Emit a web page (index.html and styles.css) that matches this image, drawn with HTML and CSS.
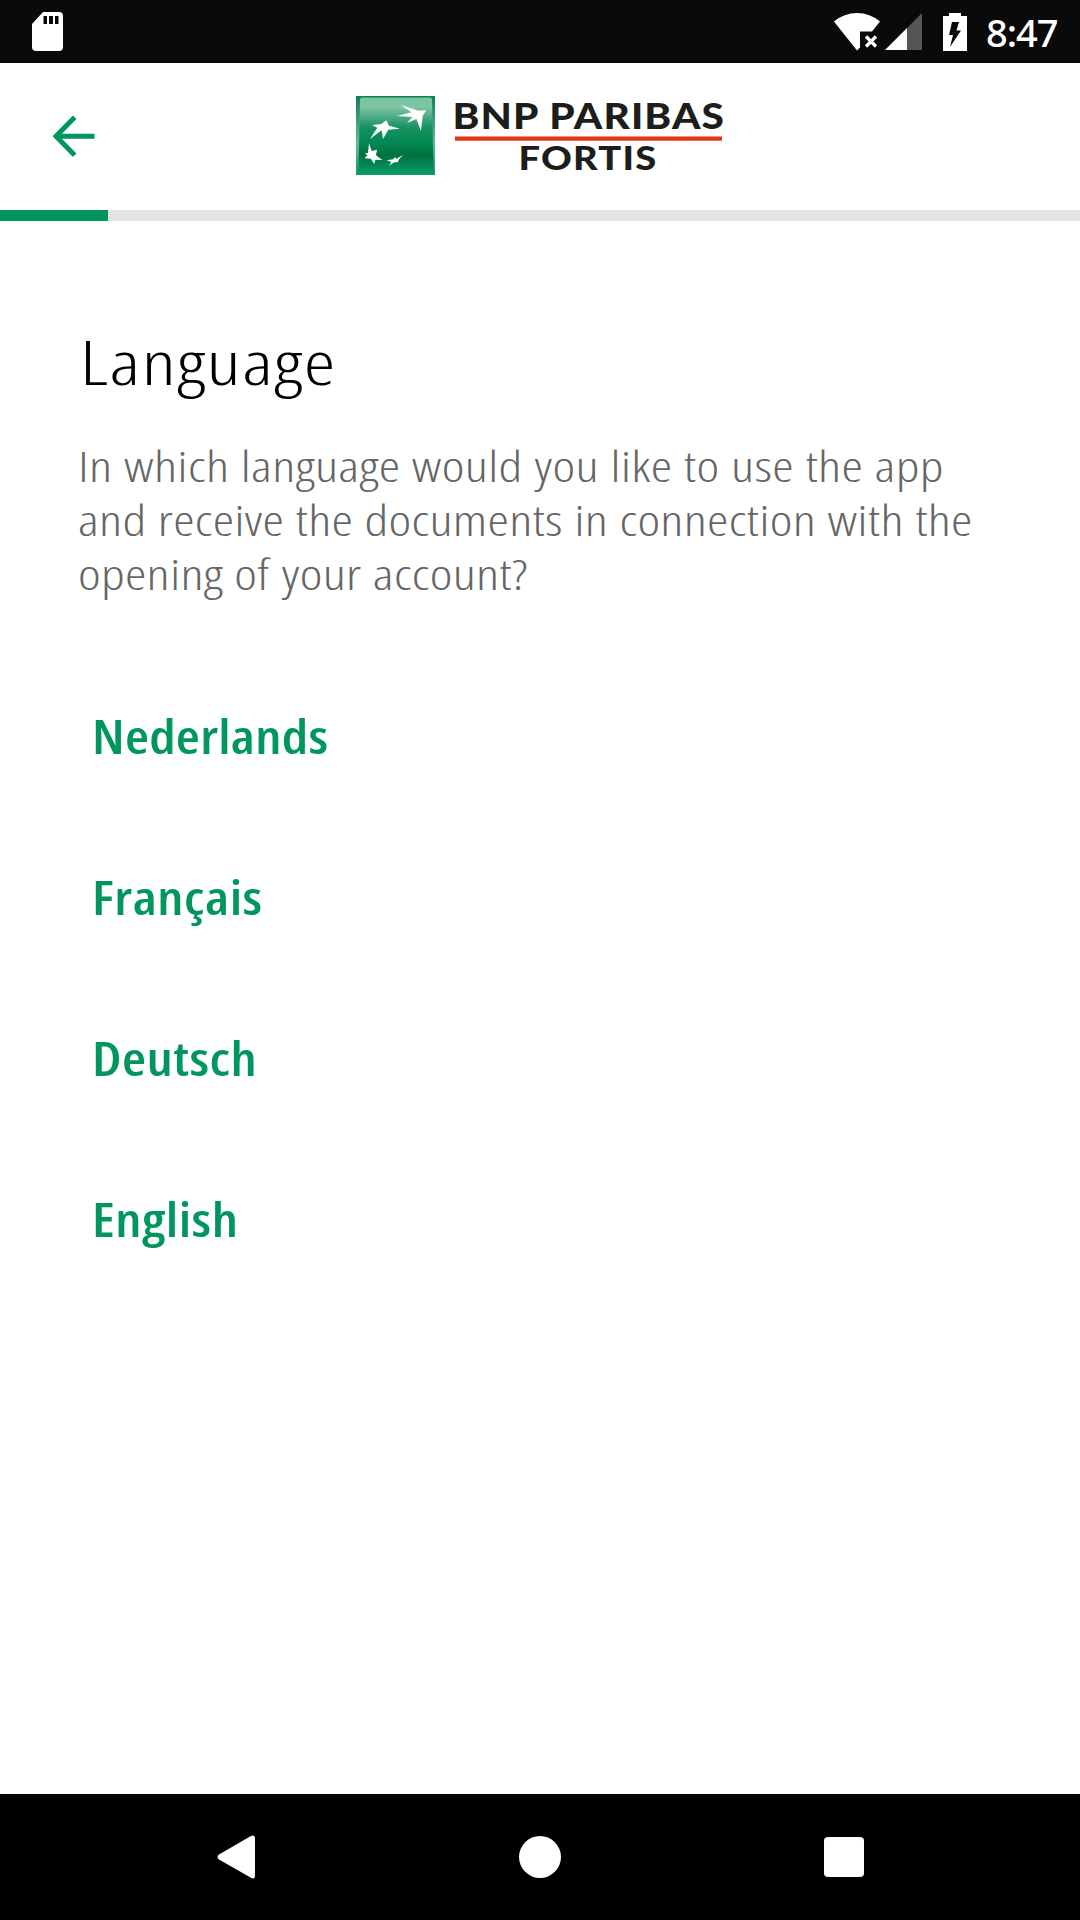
FILE: index.html
```html
<!DOCTYPE html>
<html lang="en">
<head>
<meta charset="utf-8">
<title>Language</title>
<link rel="stylesheet" href="styles.css">
</head>
<body>
<div class="screen">
  <div class="status">
    <svg class="sd" width="31" height="39" viewBox="0 0 31 39"><path fill="#fff" fill-rule="evenodd" d="M11 0H27Q31 0 31 4V35Q31 39 27 39H4Q0 39 0 35V12ZM11.500 4V12H15V4ZM17 4V12H21V4ZM23 4V12H26.500V4Z"/></svg>
    <div class="status-icons">
      <svg width="47" height="38" viewBox="0 0 47 38"><path fill="#fff" d="M0 8.500Q10 0 23 0T46 8.500L38 18.500H26V34.500L23 37.500Z"/><path stroke="#fff" stroke-width="3.200" d="M32 23.500L42 33.500M42 23.500L32 33.500"/></svg>
      <svg class="signal" width="37" height="37" viewBox="0 0 37 37"><path fill="#555" d="M37 0V37H22V15Z"/><path fill="#fff" d="M22 15V37H0Z"/></svg>
      <svg class="battery" width="24" height="38" viewBox="0 0 24 38"><path fill="#fff" d="M6 0H18V3H24V38H0V3H6Z"/><path fill="#0a0a0a" d="M9 9H16L13.500 17.500H18L7 34L10 22H6Z"/></svg>
      <span class="clock">8:47</span>
    </div>
  </div>
  <header class="header">
    <svg class="back" width="42" height="42" viewBox="0 0 42 42"><path fill="none" stroke="#00965e" stroke-width="5" d="M21.700 2.300L3 21.200L21.700 40.200M3 21.200H41.500"/></svg>
    <svg class="logo" width="370" height="80" viewBox="0 0 370 80">
      <defs>
        <linearGradient id="green" x1="0" y1="0" x2="0" y2="1"><stop offset="0" stop-color="#77c2a0"/><stop offset=".12" stop-color="#80c5a6"/><stop offset=".4" stop-color="#16915f"/><stop offset=".6" stop-color="#008853"/><stop offset=".76" stop-color="#00713f"/><stop offset="1" stop-color="#049a62"/></linearGradient>
        <linearGradient id="edge" x1="0" y1="0" x2="0" y2="1"><stop offset="0" stop-color="#0b8253"/><stop offset=".6" stop-color="#68b894"/><stop offset="1" stop-color="#0c9a63"/></linearGradient>
      </defs>
      <rect width="79" height="79" fill="url(#edge)"/>
      <path fill="url(#green)" d="M6 1.500H74Q76 1.500 76 4L77.500 77H2.500L4 4Q4 1.500 6 1.500Z"/>
      <g fill="#fff" transform="scale(.33333) translate(-48 -48)">
        <path d="M182 75L236 92L259 91L248 107L243 153L229 117L201 129L217 111L171 108L214 97Z"/>
        <path d="M139 121L147 137L180 146L145 149L129 177L125 151L90 177L112 143L96 135L124 132Z"/>
        <path d="M87 190L95 213L111 209L108 226L127 240L106 239L103 251L92 236L74 235L82 225L74 220L84 219Z"/>
        <path d="M189 225L176 239L174 247L163 247L147 257L154 246L140 241L160 238L164 232L170 236Z"/>
      </g>
      <g class="wordmark">
        <text x="96.500" y="33" font-size="36.500" textLength="272.500" lengthAdjust="spacingAndGlyphs">BNP PARIBAS</text>
        <text x="162.500" y="73.500" font-size="31.500" textLength="139" lengthAdjust="spacingAndGlyphs">FORTIS</text>
      </g>
      <rect x="99" y="40.500" width="267" height="4.200" fill="#e63312"/>
    </svg>
  </header>
  <div class="progress"><div class="progress-fill"></div></div>
  <main class="content">
    <h1 class="title">Language</h1>
    <p class="question">
      <span class="line">In which language would you like to use the app</span>
      <span class="line">and receive the documents in connection with the</span>
      <span class="line">opening of your account?</span>
    </p>
    <nav class="options">
      <a class="option">Nederlands</a>
      <a class="option">Français</a>
      <a class="option">Deutsch</a>
      <a class="option">English</a>
    </nav>
  </main>
  <div class="navbar">
    <svg width="40" height="44" viewBox="0 0 40 44"><path fill="#fff" d="M34.500 1.200Q39 -1.200 39 3.500V40.500Q39 45 34.500 42.500L3 24.500Q0 22 3 19.500Z"/></svg>
    <span class="home"></span>
    <span class="recent"></span>
  </div>
</div>
</body>
</html>
```
FILE: styles.css
```css
* { box-sizing: border-box; }
body { margin: 0; background: #fff; font-family: "Open Sans", "Noto Sans", sans-serif; }
.screen { width: 1080px; height: 1920px; display: flex; flex-direction: column; overflow: hidden; background: #fff; }

.status { height: 63px; padding: 0 22px 0 32px; background: #0a0a0a; display: flex; justify-content: space-between; align-items: center; }
.status-icons { display: flex; align-items: center; }
.status-icons svg { display: block; }
.signal { margin-left: 4px; }
.battery { margin-left: 21px; }
.clock { margin-left: 19.5px; padding-top: 1px; width: 72px; font: 500 38px/63px "Noto Sans", sans-serif; letter-spacing: -1px; color: #fff; white-space: nowrap; }

.header { height: 147px; padding: 0 53px 1px; display: grid; grid-template-columns: 303px 370px; align-items: center; }
.back { display: block; }
.logo { display: block; overflow: visible; }
.wordmark { font-family: Lato, sans-serif; font-weight: 900; fill: #1d1d1b; letter-spacing: 1px; }

.progress { height: 11px; background: #e4e4e4; }
.progress-fill { width: 10%; height: 100%; background: #00965e; }

.content { flex: 1; padding: 98px 78px 0; font-stretch: 75%; }
.title { width: max-content; margin: 0 0 0 2px; font-size: 61.5px; line-height: 84px; font-weight: 300; letter-spacing: 1.1px; color: #000; white-space: nowrap; transform: scaleX(1.3); transform-origin: 0 50%; }
.question { margin: 36px 0 0; font-size: 42.5px; font-weight: 300; line-height: 54px; color: #666; }
.line { display: block; width: max-content; white-space: nowrap; letter-spacing: .2px; word-spacing: .8px; transform: scaleX(1.275); transform-origin: 0 50%; }
.line:first-child { letter-spacing: .25px; }

.options { margin-top: 55px; padding-left: 14px; display: flex; flex-direction: column; }
.option { width: max-content; height: 161px; line-height: 161px; font-size: 46px; font-weight: 600; letter-spacing: .4px; color: #00965e; white-space: nowrap; transform: scaleX(1.2); transform-origin: 0 50%; }
.option:first-child { letter-spacing: .2px; }

.navbar { height: 126px; padding: 0 216px; background: #000; display: flex; justify-content: space-between; align-items: center; }
.home { width: 42px; height: 42px; border-radius: 50%; background: #fff; }
.recent { width: 40px; height: 40px; border-radius: 4px; background: #fff; }
```
